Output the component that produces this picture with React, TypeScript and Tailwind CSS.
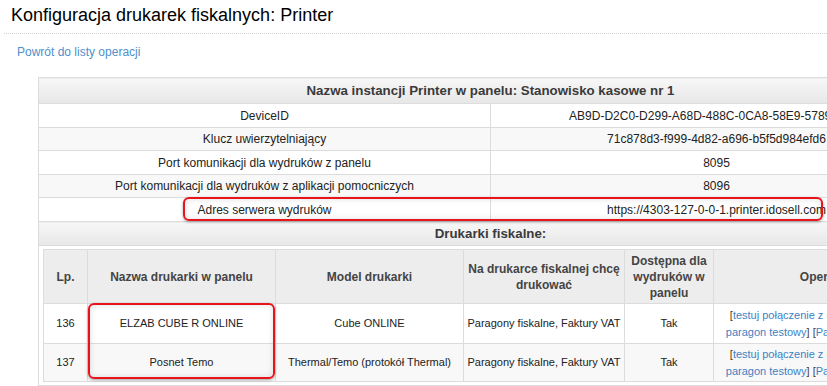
import React from "react";

const infoRows = [
  { label: "DeviceID", value: "AB9D-D2C0-D299-A68D-488C-0CA8-58E9-5789-A1F3", h: "h-[24px]", alt: false },
  { label: "Klucz uwierzytelniający", value: "71c878d3-f999-4d82-a696-b5f5d984efd6", h: "h-[23px]", alt: true },
  { label: "Port komunikacji dla wydruków z panelu", value: "8095", h: "h-[24px]", alt: false },
  { label: "Port komunikacji dla wydruków z aplikacji pomocniczych", value: "8096", h: "h-[23px]", alt: true },
  { label: "Adres serwera wydruków", value: "https://4303-127-0-0-1.printer.idosell.com", h: "h-[24px]", alt: false },
];

const printers = [
  { lp: "136", name: "ELZAB CUBE R ONLINE", model: "Cube ONLINE", h: "h-[40px]", alt: false },
  { lp: "137", name: "Posnet Temo", model: "Thermal/Temo (protokół Thermal)", h: "h-[38px]", alt: true },
];

const Ops = () => (
  <span className="leading-[16px]">
    <span className="text-[#4a3a20]">[</span>
    <a href="#" className="text-[#3d82c4]">testuj połączenie z drukarką i wydrukuj</a>
    <br />
    <a href="#" className="text-[#3d82c4]">paragon testowy</a>
    <span className="text-[#4a3a20]">] [</span>
    <a href="#" className="text-[#3d82c4]">Parametry połączenia</a>
    <span className="text-[#4a3a20]">]</span>
  </span>
);

export default function App() {
  return (
    <div className="relative w-[827px] h-[386px] overflow-hidden bg-white font-['Liberation_Sans',Arial,sans-serif] text-[#222]">
      {/* Naglowek */}
      <div className="ml-[4px] h-[34px] border-b border-dotted border-[#d0d0d0] pl-[7px] pt-[3px]">
        <h1 className="text-[18px] leading-[24px] text-black">Konfiguracja drukarek fiskalnych: Printer</h1>
      </div>
      <div className="pl-[17px] pt-[5px] h-[43px]">
        <a href="#" className="text-[12px] leading-[16px] text-[#4f8fcb]">Powrót do listy operacji</a>
      </div>

      {/* Tabela instancji */}
      <div className="ml-[38px] w-[905px]">
        <table className="w-full table-fixed border-collapse border border-[#dcdcdc] text-[12px]">
          <thead>
            <tr className="h-[26px]">
              <th colSpan={2} className="border border-[#dcdcdc] bg-linear-to-b from-[#f7f7f7] to-[#e7e7e7] text-[13.3px] font-bold text-[#3a3a3a]">
                Nazwa instancji Printer w panelu: Stanowisko kasowe nr 1
              </th>
            </tr>
          </thead>
          <tbody>
            {infoRows.map((r) => (
              <tr key={r.label} className={`${r.h} ${r.alt ? "bg-[#f8f8f8]" : "bg-white"}`}>
                <td className="w-1/2 border border-[#dcdcdc] text-center">{r.label}</td>
                <td className="w-1/2 border border-[#dcdcdc] text-center whitespace-nowrap overflow-hidden">{r.value}</td>
              </tr>
            ))}
            <tr className="h-[24px]">
              <td colSpan={2} className="border border-[#dcdcdc] bg-linear-to-b from-[#f7f7f7] to-[#e7e7e7] text-center text-[13.3px] font-bold text-[#3a3a3a]">
                Drukarki fiskalne:
              </td>
            </tr>
            <tr>
              <td colSpan={2} className="border border-[#dcdcdc] px-[4px] pt-[3px] pb-[3px]">
                {/* Tabela drukarek */}
                <table className="w-full table-fixed border-collapse border border-[#dcdcdc] text-[11px]">
                  <colgroup>
                    <col className="w-[44px]" />
                    <col className="w-[188px]" />
                    <col className="w-[188px]" />
                    <col className="w-[161px]" />
                    <col className="w-[89px]" />
                    <col />
                  </colgroup>
                  <thead>
                    <tr className="h-[54px] bg-[#ededed] text-[#444] text-[12px] leading-[16px]">
                      <th className="border border-[#dcdcdc] font-bold">Lp.</th>
                      <th className="border border-[#dcdcdc] font-bold">Nazwa drukarki w panelu</th>
                      <th className="border border-[#dcdcdc] font-bold">Model drukarki</th>
                      <th className="border border-[#dcdcdc] font-bold">Na drukarce fiskalnej chcę drukować</th>
                      <th className="border border-[#dcdcdc] font-bold px-[6px]">Dostępna dla wydruków w panelu</th>
                      <th className="border border-[#dcdcdc] font-bold">Operacje</th>
                    </tr>
                  </thead>
                  <tbody>
                    {printers.map((p) => (
                      <tr key={p.lp} className={`${p.h} ${p.alt ? "bg-[#f8f8f8]" : "bg-white"}`}>
                        <td className="border border-[#dcdcdc] text-center">{p.lp}</td>
                        <td className="border border-[#dcdcdc] text-center">{p.name}</td>
                        <td className="border border-[#dcdcdc] text-center whitespace-nowrap">{p.model}</td>
                        <td className="border border-[#dcdcdc] text-center whitespace-nowrap">Paragony fiskalne, Faktury VAT</td>
                        <td className="border border-[#dcdcdc] text-center">Tak</td>
                        <td className="border border-[#dcdcdc] text-center whitespace-nowrap">
                          <Ops />
                        </td>
                      </tr>
                    ))}
                  </tbody>
                </table>
              </td>
            </tr>
          </tbody>
        </table>
      </div>

      {/* Zaznaczenia */}
      <div className="pointer-events-none absolute left-[183px] top-[197px] h-[24px] w-[640px] rounded-[6px] border-2 border-[#e8141c] shadow-[inset_0_0_6px_rgba(0,0,0,0.12),0_1px_3px_rgba(0,0,0,0.35)]" />
      <div className="pointer-events-none absolute left-[88px] top-[303px] h-[76px] w-[187px] rounded-[6px] border-2 border-[#e8141c] shadow-[inset_0_0_6px_rgba(0,0,0,0.12),0_1px_3px_rgba(0,0,0,0.35)]" />
    </div>
  );
}
